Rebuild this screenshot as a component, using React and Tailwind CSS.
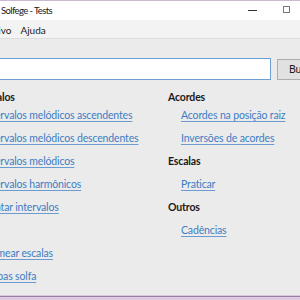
import React from "react";

const left = [
  { type: "header", text: "Intervalos" },
  { type: "link", text: "Intervalos melódicos ascendentes" },
  { type: "link", text: "Intervalos melódicos descendentes" },
  { type: "link", text: "Intervalos melódicos" },
  { type: "link", text: "Intervalos harmônicos" },
  { type: "link", text: "Cantar intervalos" },
  { type: "header", text: "Teoria" },
  { type: "link", text: "Nomear escalas" },
  { type: "link", text: "Etapas solfa" },
];

const right = [
  { type: "header", text: "Acordes" },
  { type: "link", text: "Acordes na posição raiz" },
  { type: "link", text: "Inversões de acordes" },
  { type: "header", text: "Escalas" },
  { type: "link", text: "Praticar" },
  { type: "header", text: "Outros" },
  { type: "link", text: "Cadências" },
];

function Item({ item, first }) {
  if (item.type === "header") {
    return (
      <div
        className={
          first
            ? "h-[14px] leading-[14px] font-bold text-[#1a1a1a] whitespace-nowrap"
            : "h-[23px] leading-[23px] font-bold text-[#1a1a1a] whitespace-nowrap"
        }
      >
        {item.text}
      </div>
    );
  }
  return (
    <div className="h-[23px] leading-[23px] pl-[13px] whitespace-nowrap">
      <a className="text-[#3d7dc3] underline underline-offset-2 decoration-[#6c9bd0]">
        {item.text}
      </a>
    </div>
  );
}

export default function App() {
  return (
    <div
      className="w-[300px] h-[300px] overflow-hidden bg-[#ebebeb] flex flex-col text-[10.5px] tracking-[-0.15px] text-[#1a1a1a]"
      style={{ fontFamily: "Lato, 'Noto Sans', sans-serif" }}
    >
      {/* title bar */}
      <div className="h-px bg-[#cdb8d2]" />
      <div className="h-[19px] bg-white flex items-center">
        <span className="pl-[1px] pt-px flex-1 whitespace-nowrap text-[9.5px] tracking-[-0.6px]">
          Solfege - Tests
        </span>
        <div className="w-[9px] h-px bg-[#333] mr-[26px]" />
        <div className="w-[7px] h-[7px] border border-[#777] mr-[10px] mb-[2px]" />
      </div>
      {/* menu */}
      <div className="h-[19px] pt-[2px] bg-[#f3f3f3] border-b border-[#dcdcdc] flex items-center gap-[9px] text-[10px] tracking-normal">
        <span className="ml-[-23px]">Arquivo</span>
        <span>Ajuda</span>
      </div>
      {/* search */}
      <div className="flex items-start mt-[19px] h-[22px]">
        <input
          className="ml-[-20px] w-[291px] shrink-0 h-[22px] bg-white border border-[#6e9fd3] outline-none"
          defaultValue=""
        />
        <button className="ml-[6px] mt-px shrink-0 w-[60px] h-[21px] border border-[#adadad] bg-[#e1e1e1] text-left pl-[11px] text-[#1a1a1a]">
          Buscar
        </button>
      </div>
      {/* lists */}
      <div className="flex mt-[10px]">
        <div className="ml-[-30px] w-[198px] shrink-0 flex flex-col">
          {left.map((it, i) => (
            <Item key={i} item={it} first={i === 0} />
          ))}
        </div>
        <div className="flex flex-col">
          {right.map((it, i) => (
            <Item key={i} item={it} first={i === 0} />
          ))}
        </div>
      </div>
      <div className="flex-1" />
      {/* window bottom border */}
      <div className="h-px bg-[#d9c9dd]" />
      <div className="h-px bg-[#9a7fa3]" />
      <div className="h-[3px] bg-[#dccbe0]" />
    </div>
  );
}
